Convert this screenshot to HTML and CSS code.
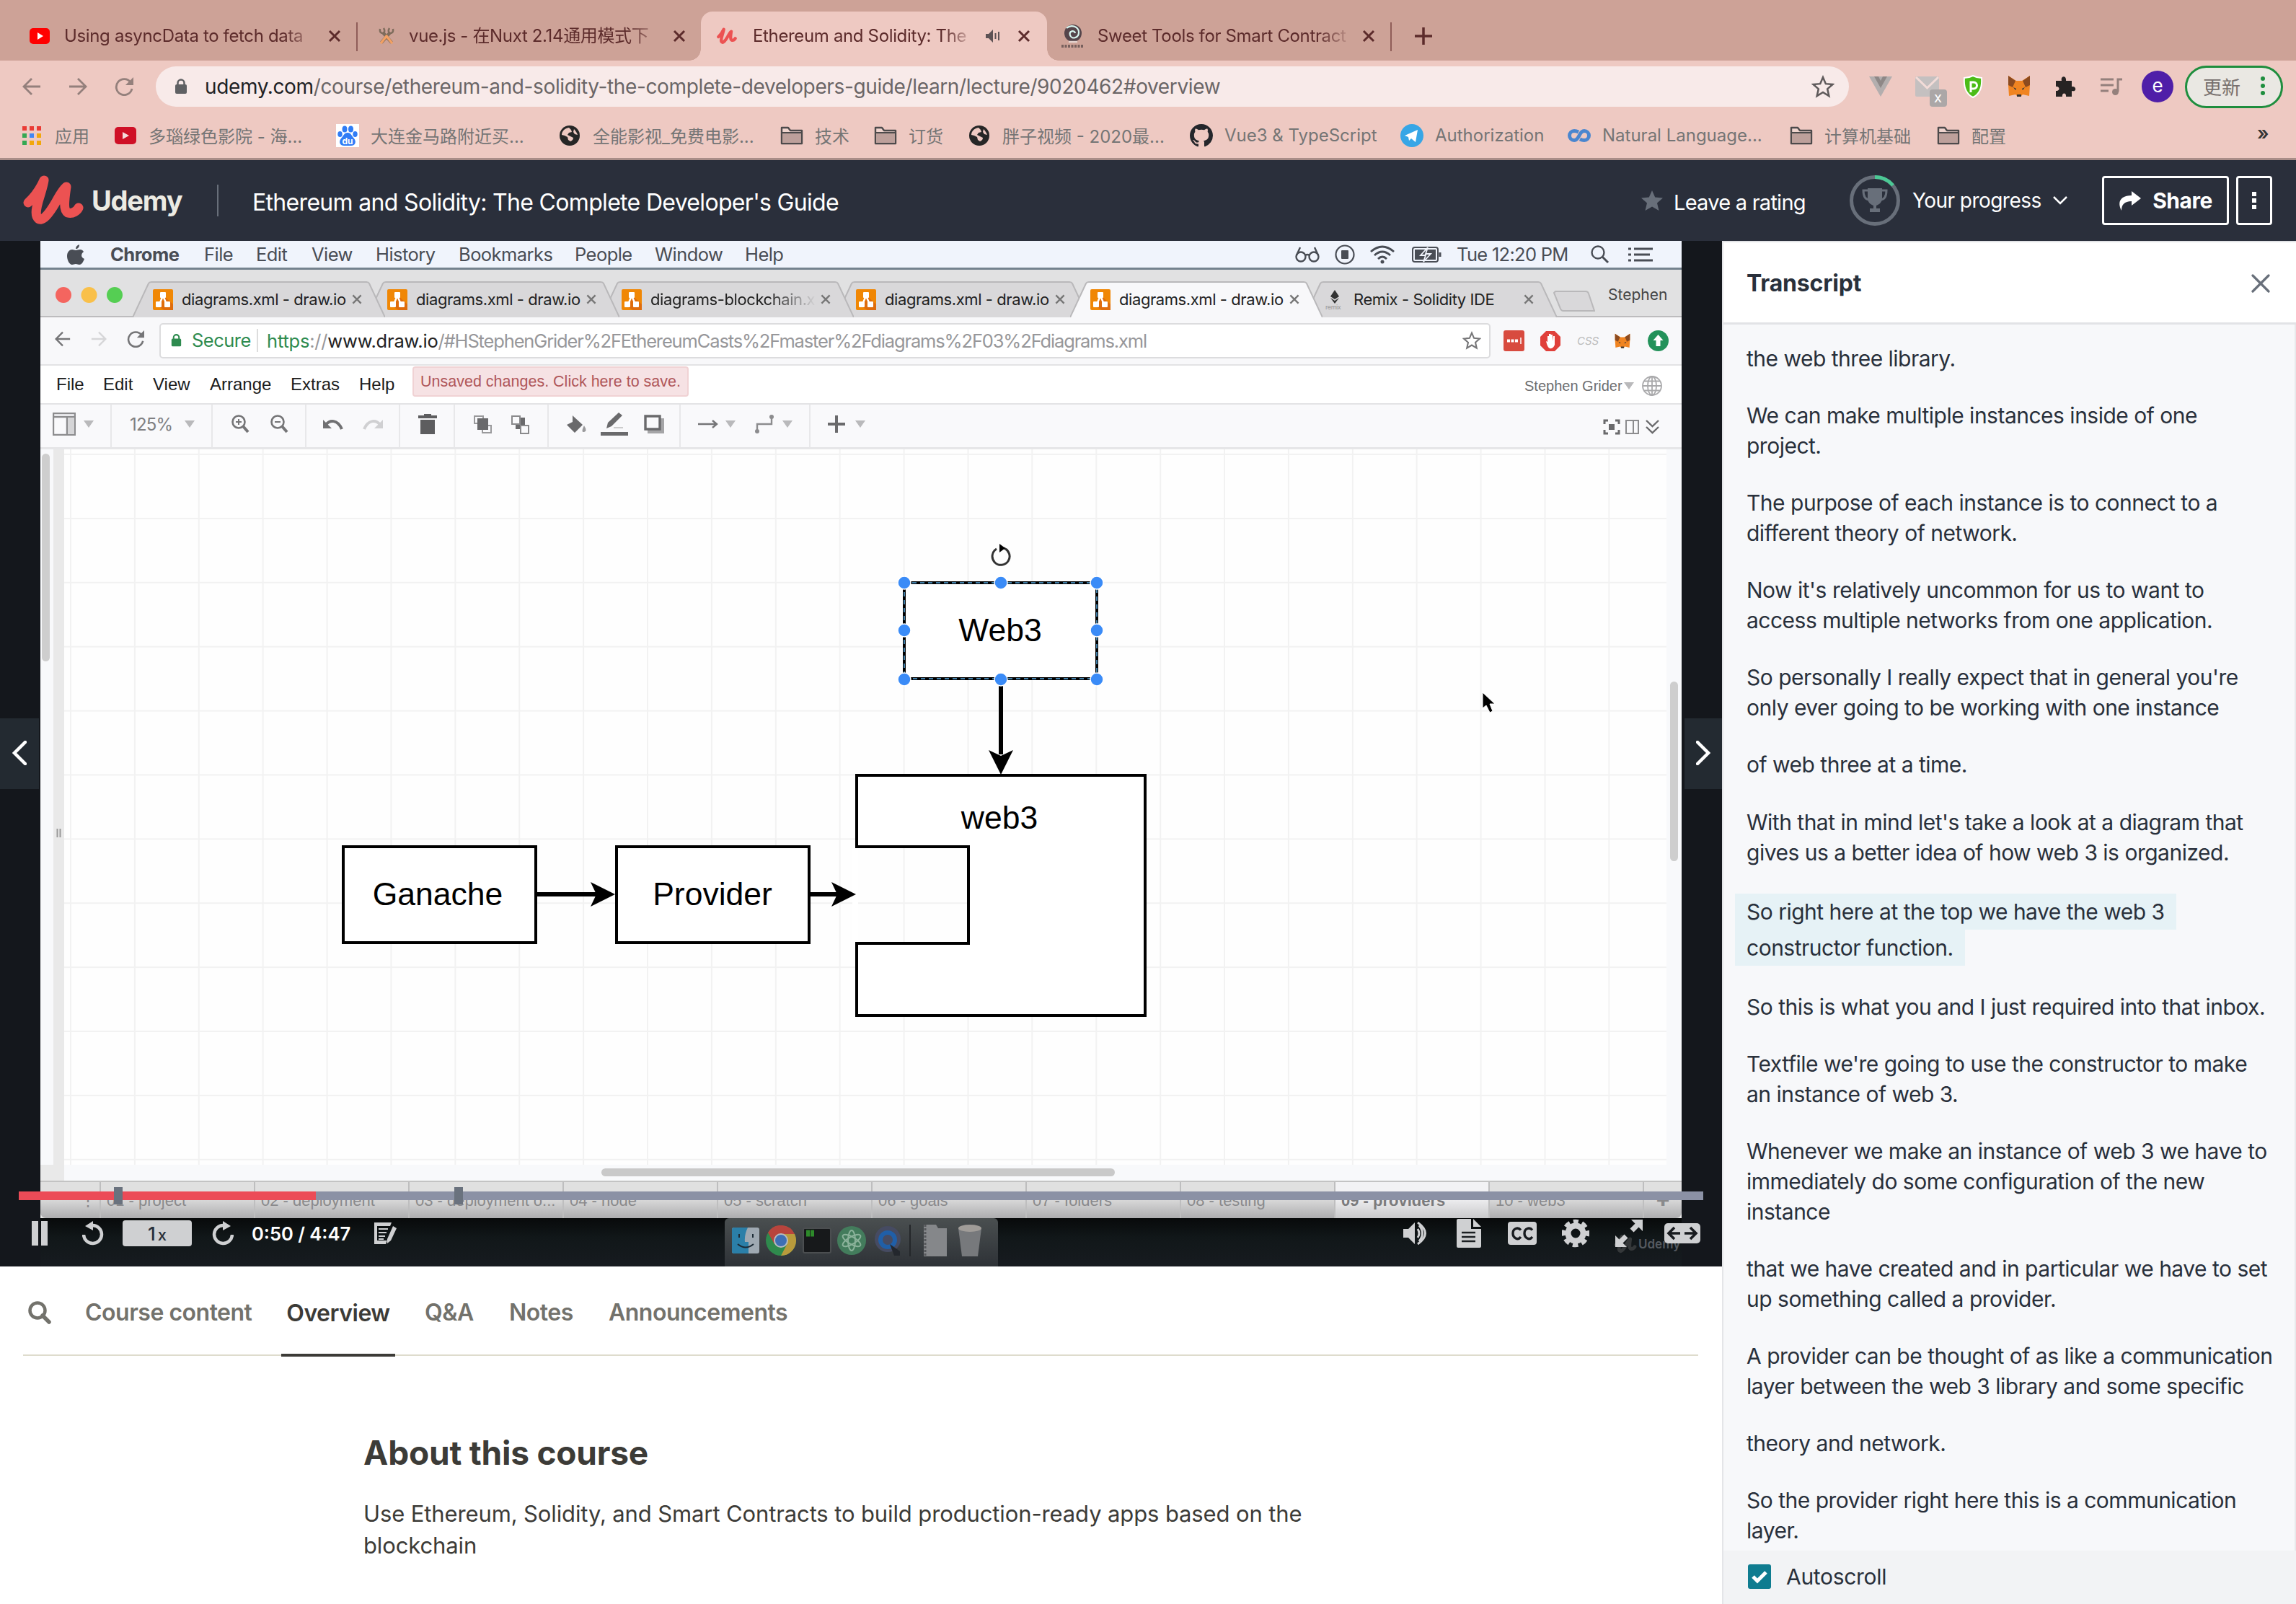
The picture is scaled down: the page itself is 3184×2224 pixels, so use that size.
FILE: index.html
```html
<!DOCTYPE html>
<html lang="zh-CN">
<head>
<meta charset="utf-8">
<title>Ethereum and Solidity: The Complete Developer's Guide | Udemy</title>
<link rel="stylesheet" href="styles.css">
</head>
<body>
<svg class="defs" width="0" height="0">
  <symbol id="close" viewBox="0 0 20 20"><path d="M3 3L17 17M17 3L3 17" fill="none" stroke="currentColor" stroke-width="3"/></symbol>
  <symbol id="ulogo" viewBox="0 0 84 70"><path d="M7 38C16 30 24 18 29 7C26 26 15 46 19 57C25 70 38 50 45 38C51 27 56 19 60 16C58 30 55 48 62 52C69 54 75 49 77 45" fill="none" stroke="#ec5252" stroke-width="13" stroke-linecap="round" stroke-linejoin="round"/></symbol>
  <symbol id="folder" viewBox="0 0 32 28"><path d="M2 3h9l3 4h16v18H2z" fill="#efd4ce" stroke="#4d4a4b" stroke-width="2.4" stroke-linejoin="round"/><path d="M3 11h26v13H3z" fill="#bda09b"/><path d="M2 10h28" stroke="#4d4a4b" stroke-width="2"/></symbol>
  <symbol id="globe" viewBox="0 0 28 28"><circle cx="14" cy="14" r="14" fill="#262626"/><path d="M13 3C7 4 3 8 3 13l4 1 4 2 1 4 3 2c2-1 4-2 4-5l-4-2-4-2 2-3 4-1-1-3zM20 5c2 2 4 5 5 8l-4-1-2-3z" fill="#eec9c2"/></symbol>
  <symbol id="drawio" viewBox="0 0 28 29"><rect width="28" height="29" rx="2" fill="#f08705"/><path d="M16 10l12 11v8H16L8 24z" fill="#df6c0c"/><path d="M14 9L9 21M14 9l5 12" stroke="#fff" stroke-width="2.5"/><rect x="10" y="4" width="8" height="8" rx="1" fill="#fff"/><rect x="4" y="17" width="8" height="8" rx="1" fill="#fff"/><rect x="16" y="17" width="8" height="8" rx="1" fill="#fff"/></symbol>
  <symbol id="trap" viewBox="0 0 350 50"><path d="M0 50L22 3Q23 1 26 1H324Q327 1 328 3L350 50" stroke="#b9b8ba" stroke-width="2"/></symbol>
  <symbol id="caret" viewBox="0 0 14 10"><path d="M0 0h14L7 10z" fill="#b9b9bb"/></symbol>
  <symbol id="back" viewBox="0 0 26 26"><path d="M25 13H2M13 2L2 13l11 11" fill="none" stroke="currentColor" stroke-width="2.8"/></symbol>
  <symbol id="reload" viewBox="0 0 26 26"><path d="M22 7A11 11 0 1 0 24 16" fill="none" stroke="currentColor" stroke-width="2.8"/><path d="M26 0v11H15z" fill="currentColor"/></symbol>
  <symbol id="star" viewBox="0 0 30 30"><path d="M15 3l3.6 8.4 9 .8-6.800 6 2 9L15 22.500 7.200 27.200l2-9-6.800-6 9-.8z" fill="none" stroke="currentColor" stroke-width="2.400"/></symbol>
  <symbol id="lock" viewBox="0 0 18 22"><path d="M4.500 10V6a4.500 4.500 0 0 1 9 0v4" fill="none" stroke="currentColor" stroke-width="2.500"/><rect y="8" x="1" width="16" height="13" rx="2" fill="currentColor"/></symbol>
  <symbol id="fox" viewBox="0 0 32 30"><path d="M1 0l11 7h8L31 0v13l-1 15-9-2-3 3h-4l-3-3-9 2L1 13z" fill="#f08421"/><path d="M1 0l10 7-4 9-6-3zM31 0L21 7l4 9 6-3z" fill="#8c4a1f"/><path d="M13 26h6v3h-6z" fill="#333"/><path d="M8 16l4 2-1 2zM24 16l-4 2 1 2z" fill="#26323f"/></symbol>
</svg>

<header class="browser">
  <div class="tabstrip">
    <div class="tab tab-first">
      <svg width="30" height="24" viewBox="0 0 30 24"><rect x="1" y="1" width="28" height="22" rx="5" fill="#f00"/><path d="M12 7l8 5-8 5z" fill="#fff"/></svg>
      <span class="tab-title">Using asyncData to fetch data</span><svg class="tab-x"><use href="#close"/></svg>
    </div>
    <i class="tab-sep"></i>
    <div class="tab tab-second">
      <svg width="22" height="24" viewBox="0 0 22 24"><g fill="none" stroke="#7f6c5c" stroke-width="4.500"><path d="M6 7l12 14M16 7L4 21"/></g><g fill="none" stroke="#7f6c5c" stroke-width="2.500"><path d="M2 2q-1 6 4 6 4-2 1-7M20 2q1 6-4 6-4-2-1-7"/></g><path d="M11 12l7 9M11 12l-7 9" stroke="#f2a063" stroke-width="3.500" stroke-linecap="round"/></svg>
      <span class="tab-title">vue.js - 在Nuxt 2.14通用模式下</span><svg class="tab-x"><use href="#close"/></svg>
    </div>
    <div class="tab tab-active">
      <svg width="28" height="24"><use href="#ulogo"/></svg>
      <span class="tab-title">Ethereum and Solidity: The</span>
      <svg width="22" height="20" viewBox="0 0 22 20"><path d="M1 7h4l6-6v18l-6-6H1z" fill="#5d5255"/><path d="M14.500 6v8M19 4v12" stroke="#5d5255" stroke-width="2"/></svg>
      <svg class="tab-x"><use href="#close"/></svg>
    </div>
    <div class="tab tab-last">
      <svg width="32" height="34" viewBox="0 0 32 34"><circle cx="17" cy="13" r="12" fill="#55454b"/><path d="M8 6c7-6 17-2 17 6s-10 10-12 4 6-8 7-3" fill="none" stroke="#d8f5ef" stroke-width="2.200"/><path d="M11 25h12" stroke="#e3d3ce" stroke-width="2.500"/><path d="M1 31h30" stroke="#77605d" stroke-width="4" stroke-dasharray="3 1.500"/></svg>
      <span class="tab-title">Sweet Tools for Smart Contract</span><svg class="tab-x"><use href="#close"/></svg>
    </div>
    <i class="tab-sep"></i>
    <svg class="newtab" width="24" height="24" viewBox="0 0 24 24"><path d="M12 0v24M0 12h24" stroke="#5c2b2b" stroke-width="3.500"/></svg>
  </div>

  <div class="toolbar">
    <svg class="nav" width="26" height="26"><use href="#back"/></svg>
    <svg class="nav flip" width="26" height="26"><use href="#back"/></svg>
    <svg class="nav" width="26" height="26"><use href="#reload"/></svg>
    <div class="omnibox">
      <svg class="lock" width="18" height="22"><use href="#lock"/></svg>
      <span class="url"><b>udemy.com</b>/course/ethereum-and-solidity-the-complete-developers-guide/learn/lecture/9020462#overview</span>
      <svg class="fav" width="32" height="32"><use href="#star"/></svg>
    </div>
    <div class="exts">
      <svg width="32" height="28" viewBox="0 0 32 28"><path d="M0 0h32L16 28z" fill="#b3aeae"/><path d="M7 0h6l3 6 3-6h6l-9 16z" fill="#8e8887"/></svg>
      <span class="mail"><svg width="33" height="28" viewBox="0 0 33 28"><rect width="33" height="28" rx="2" fill="#c4c0c0"/><path d="M1 1l15.500 15L32 1" fill="none" stroke="#f3dcd8" stroke-width="3"/></svg><em>x</em></span>
      <svg width="28" height="32" viewBox="0 0 28 32"><path d="M14 1c4 2 8 3 12 3 1 12-2 22-12 27C4 26 1 16 2 4c4 0 8-1 12-3z" fill="#4cbc17" stroke="#fff" stroke-width="2"/><path d="M11 24V10h4a4 4 0 0 1 0 9h-4" fill="none" stroke="#fff" stroke-width="3"/></svg>
      <svg width="32" height="30"><use href="#fox"/></svg>
      <svg width="30" height="30" viewBox="0 0 30 30"><path d="M2 7h8c-2-7 7-8 6 0h8v8c7-1 7 8 0 6v8h-8c1-6-6-6-5 0H2v-8c6 1 6-7 0-6z" fill="#262323"/></svg>
      <svg width="32" height="26" viewBox="0 0 32 26"><path d="M1 3h18M1 11h18M1 19h11" stroke="#94807c" stroke-width="3"/><path d="M25 20V3h6" fill="none" stroke="#94807c" stroke-width="3"/><circle cx="21.500" cy="20.500" r="4.500" fill="#94807c"/></svg>
      <span class="avatar">e</span>
    </div>
    <div class="update">更新<svg width="6" height="28" viewBox="0 0 6 28"><g fill="#1e8e3e"><circle cx="3" cy="4" r="3"/><circle cx="3" cy="14" r="3"/><circle cx="3" cy="24" r="3"/></g></svg></div>
  </div>

  <nav class="bookmarks">
    <a class="w130"><svg width="28" height="28" viewBox="0 0 28 28"><g stroke-width="6"><path d="M1 4h6M11 4h6M21 4h6" stroke="#ea3b35"/><path d="M1 14h6" stroke="#34a853"/><path d="M11 14h6" stroke="#4285f4"/><path d="M21 14h6M11 24h6M21 24h6" stroke="#f2a70b"/><path d="M1 24h6" stroke="#34a853"/></g></svg>应用</a>
    <a><svg width="30" height="24" viewBox="0 0 30 24"><rect width="30" height="24" rx="5" fill="#cf1026"/><path d="M11 7l9 5-9 5z" fill="#f5dcdc"/></svg>多瑙绿色影院 - 海...</a>
    <a><svg width="32" height="32" viewBox="0 0 32 32"><rect width="32" height="32" fill="#fff"/><g fill="#2f7cf6"><ellipse cx="12" cy="7" rx="3.500" ry="4.500"/><ellipse cx="20.500" cy="7" rx="3.500" ry="4.500"/><ellipse cx="5.500" cy="14" rx="3.200" ry="4"/><ellipse cx="26.500" cy="14" rx="3.200" ry="4"/><path d="M16 12c5 0 6 5 9 8 4 5 1 10-4 10H11c-5 0-8-5-4-10 3-3 4-8 9-8z"/></g><text x="8.500" y="28" font-size="12" font-weight="700" fill="#fff">du</text></svg>大连金马路附近买...</a>
    <a><svg width="28" height="28"><use href="#globe"/></svg>全能影视_免费电影...</a>
    <a class="w130"><svg width="32" height="28"><use href="#folder"/></svg>技术</a>
    <a class="w130"><svg width="32" height="28"><use href="#folder"/></svg>订货</a>
    <a><svg width="28" height="28"><use href="#globe"/></svg>胖子视频 - 2020最...</a>
    <a class="w292"><svg width="32" height="32" viewBox="0 0 16 16"><path fill="#24262b" d="M8 0C3.580 0 0 3.580 0 8c0 3.540 2.290 6.530 5.470 7.590.4.070.55-.17.55-.38 0-.19-.01-.82-.01-1.490-2.010.37-2.530-.49-2.690-.94-.09-.23-.48-.94-.82-1.130-.28-.15-.68-.52-.01-.53.63-.01 1.080.58 1.230.82.72 1.210 1.870.87 2.330.66.07-.52.28-.87.51-1.070-1.780-.2-3.640-.89-3.640-3.950 0-.87.31-1.590.82-2.150-.08-.2-.36-1.020.08-2.120 0 0 .67-.21 2.200.82a7.600 7.600 0 0 1 4 0c1.530-1.040 2.200-.82 2.200-.82.44 1.100.16 1.920.08 2.120.51.56.82 1.270.82 2.150 0 3.070-1.870 3.750-3.650 3.950.29.25.54.73.54 1.480 0 1.070-.01 1.930-.01 2.200 0 .21.15.46.55.38A8 8 0 0 0 16 8c0-4.420-3.580-8-8-8z"/></svg>Vue3 &amp; TypeScript</a>
    <a class="w232"><svg width="32" height="32" viewBox="0 0 32 32"><circle cx="16" cy="16" r="16" fill="#37a6e6"/><path d="M6 16L24 8l-3 17-6-5-3 3-1-5z" fill="#fff"/></svg>Authorization</a>
    <a><svg width="32" height="18" viewBox="0 0 32 18"><g fill="none" stroke="#4a86cf" stroke-width="5"><path d="M15 4Q12 2.500 9 2.500a6.500 6.500 0 0 0 0 13Q13 15.500 16 9T23 2.500a6.500 6.500 0 0 1 0 13Q20 15.500 17 14"/></g></svg>Natural Language...</a>
    <a class="w204"><svg width="32" height="28"><use href="#folder"/></svg>计算机基础</a>
    <a class="w204"><svg width="32" height="28"><use href="#folder"/></svg>配置</a>
    <span class="more">»</span>
  </nav>
</header>

<header class="course-bar">
  <svg class="brand" width="84" height="70"><use href="#ulogo"/></svg>
  <span class="brand-name">Udemy</span>
  <i class="bar-div"></i>
  <h1>Ethereum and Solidity: The Complete Developer's Guide</h1>
  <svg class="rate-star" width="30" height="28" viewBox="0 0 30 28"><path d="M15 0l4.200 9.500L30 10.500l-8 7 2.500 10.500L15 22.500 5.500 28 8 17.500l-8-7 10.800-1z" fill="#686f7a"/></svg>
  <span class="rate">Leave a rating</span>
  <svg class="trophy" width="70" height="70" viewBox="0 0 70 70"><circle cx="35" cy="35" r="32.500" fill="none" stroke="#686f7a" stroke-width="5"/><path d="M35 2.500A32.500 32.500 0 0 1 60 14" fill="none" stroke="#4bc995" stroke-width="5"/><g fill="#686f7a"><path d="M25 18h20v14c0 6-5 9-8 10v4h5v5H28v-5h5v-4c-3-1-8-4-8-10z"/></g><path d="M25 21h-6c0 9 3 13 9 13M45 21h6c0 9-3 13-9 13" fill="none" stroke="#686f7a" stroke-width="3"/></svg>
  <span class="progress-label">Your progress</span>
  <svg class="chev" width="20" height="12" viewBox="0 0 20 12"><path d="M1 1l9 9 9-9" fill="none" stroke="#fff" stroke-width="2.500"/></svg>
  <button class="btn share"><svg width="31" height="27" viewBox="0 0 31 27"><path d="M18 0l13 10-13 10v-6C8 14 4 19 4 27-3 14 4 6 18 6z" fill="#fff"/></svg>Share</button>
  <button class="btn dots"><svg width="6" height="24" viewBox="0 0 6 24"><path d="M0 0h6v6H0zM0 9h6v6H0zM0 18h6v6H0z" fill="#fff"/></svg></button>
</header>

<div class="columns">
<main>
<section class="player">
  <div class="frame">
    <div class="macbar">
      <svg width="24" height="28" viewBox="0 0 24 28"><path d="M17 0c0 4-2 6-5 6 0-3 2-5 5-6zM12 8c2 0 3-1 6-1 2 0 4 1 5 3-4 3-4 8 1 10-2 5-4 8-7 8-2 0-3-1-5-1s-3 1-5 1C3 28 0 21 0 16c0-6 4-9 7-9 2 0 3 1 5 1z" fill="#494d55"/></svg>
      <b>Chrome</b><span>File</span><span>Edit</span><span>View</span><span>History</span><span>Bookmarks</span><span>People</span><span>Window</span><span>Help</span>
      <svg width="34" height="22" viewBox="0 0 34 22"><g fill="none" stroke="#494d55" stroke-width="2.400"><circle cx="8" cy="14" r="6.500"/><circle cx="26" cy="14" r="6.500"/><path d="M14 12q3-2 6 0M2 12L7 1M32 12L27 1"/></g></svg>
      <svg width="28" height="28" viewBox="0 0 28 28"><circle cx="14" cy="14" r="12.500" fill="none" stroke="#494d55" stroke-width="2.200"/><rect x="9" y="8" width="10" height="12" rx="1" fill="#494d55"/></svg>
      <svg width="36" height="26" viewBox="0 0 36 26"><g fill="none" stroke="#494d55" stroke-width="2.800"><path d="M2 9q16-14 32 0M7 14q11-10 22 0M12 19q6-6 12 0"/></g><circle cx="18" cy="23" r="2.500" fill="#494d55"/></svg>
      <svg width="41" height="22" viewBox="0 0 41 22"><rect x="1" y="1" width="35" height="20" rx="3" fill="none" stroke="#494d55" stroke-width="2"/><rect x="4" y="4" width="29" height="14" fill="#494d55"/><path d="M39 8v6" stroke="#494d55" stroke-width="3"/><path d="M22 1l-10 11h7l-3 9 10-11h-7z" fill="#494d55" stroke="#f0f4fc" stroke-width="1.800"/></svg>
      <span class="clock">Tue 12:20 PM</span>
      <svg width="26" height="26" viewBox="0 0 26 26"><circle cx="10" cy="10" r="8.500" fill="none" stroke="#494d55" stroke-width="2.400"/><path d="M16 16l8 8" stroke="#494d55" stroke-width="3"/></svg>
      <svg width="34" height="20" viewBox="0 0 34 20"><path d="M0 2h4M8 2h26M0 10h4M8 10h22M0 18h4M8 18h26" stroke="#494d55" stroke-width="3"/></svg>
    </div>

    <div class="mtabs">
      <svg class="lights" width="94" height="24" viewBox="0 0 94 24"><circle cx="12" cy="12" r="11" fill="#f4655f"/><circle cx="47.500" cy="12" r="11" fill="#f9c04a"/><circle cx="83" cy="12" r="11" fill="#55ce53"/></svg>
      <div class="mtab z5"><svg class="trap"><use href="#trap"/></svg><svg class="fi"><use href="#drawio"/></svg><span>diagrams.xml - draw.io</span><svg class="mx"><use href="#close"/></svg></div>
      <div class="mtab z4"><svg class="trap"><use href="#trap"/></svg><svg class="fi"><use href="#drawio"/></svg><span>diagrams.xml - draw.io</span><svg class="mx"><use href="#close"/></svg></div>
      <div class="mtab z3"><svg class="trap"><use href="#trap"/></svg><svg class="fi"><use href="#drawio"/></svg><span class="fade">diagrams-blockchain.x</span><svg class="mx"><use href="#close"/></svg></div>
      <div class="mtab z2"><svg class="trap"><use href="#trap"/></svg><svg class="fi"><use href="#drawio"/></svg><span>diagrams.xml - draw.io</span><svg class="mx"><use href="#close"/></svg></div>
      <div class="mtab active"><svg class="trap"><use href="#trap"/></svg><svg class="fi"><use href="#drawio"/></svg><span>diagrams.xml - draw.io</span><svg class="mx"><use href="#close"/></svg></div>
      <div class="mtab z1"><svg class="trap"><use href="#trap"/></svg><svg class="fi" viewBox="0 0 28 29"><path d="M14 1l6 9-6 4-6-4zM8 12l6 4 6-4-6 8z" fill="#333"/><text x="1" y="28" font-size="9" fill="#999">remix</text></svg><span>Remix - Solidity IDE</span><svg class="mx"><use href="#close"/></svg></div>
      <svg class="mnew" width="58" height="29" viewBox="0 0 58 29"><path d="M3 1h42q3 0 4 3l8 24H14q-3 0-4-3L1 3z" fill="#d9d8da" stroke="#b9b8ba" stroke-width="2"/></svg>
      <span class="muser">Stephen</span>
    </div>

    <div class="mtool">
      <svg width="22" height="22"><use href="#back"/></svg>
      <svg class="flip faint" width="22" height="22"><use href="#back"/></svg>
      <svg width="24" height="24"><use href="#reload"/></svg>
      <div class="murl">
        <svg width="15" height="20"><use href="#lock"/></svg><span class="secure">Secure</span>
        <span class="addr"><u>https</u>://<b>www.draw.io</b><span class="path">/#HStephenGrider%2FEthereumCasts%2Fmaster%2Fdiagrams%2F03%2Fdiagrams.xml</span></span>
        <svg class="mstar" width="26" height="28"><use href="#star"/></svg>
      </div>
      <div class="mext">
        <svg width="29" height="29" viewBox="0 0 29 29"><rect width="29" height="29" rx="3" fill="#d84b3f"/><path d="M5 14.500h15" stroke="#fff" stroke-width="4" stroke-dasharray="4 1.500"/><path d="M24 10v9" stroke="#fff" stroke-width="1.500"/></svg>
        <svg width="28" height="28" viewBox="0 0 28 28"><path d="M8 0h12l8 8v12l-8 8H8l-8-8V8z" fill="#e0403a"/><path d="M8 14l2 1V7h2v6V4h2.500v9V5H17v9l1-7h2v12q-2 6-7 5-3-1-5-10z" fill="#fff"/></svg>
        <span>CSS</span>
        <svg width="22" height="22"><use href="#fox"/></svg>
        <svg width="29" height="29" viewBox="0 0 29 29"><circle cx="14.500" cy="14.500" r="14.500" fill="#23925a"/><path d="M14.500 6l7 8h-4v8h-6v-8h-4z" fill="#fff"/></svg>
      </div>
    </div>

    <div class="dmenu">
      <span>File</span><span>Edit</span><span>View</span><span>Arrange</span><span>Extras</span><span>Help</span>
      <em>Unsaved changes. Click here to save.</em>
      <small>Stephen Grider</small>
      <svg width="14" height="10"><use href="#caret"/></svg>
      <svg width="28" height="28" viewBox="0 0 28 28"><g fill="none" stroke="#a9a9ab" stroke-width="1.800"><circle cx="14" cy="14" r="13"/><ellipse cx="14" cy="14" rx="6" ry="13"/><path d="M1 14h26M14 1v26M3 7.500h22M3 20.500h22"/></g></svg>
    </div>

    <div class="dtool">
      <svg width="32" height="32" viewBox="0 0 32 32"><path d="M1 1h30v30H1zM1 6h30M20 6v25" fill="none" stroke="#8c8c8e" stroke-width="2.400"/><path d="M21 7h9v23h-9z" fill="#d5d5d7"/></svg>
      <svg width="14" height="10"><use href="#caret"/></svg><i></i>
      <span>125%</span><svg width="14" height="10"><use href="#caret"/></svg><i></i>
      <svg width="26" height="26" viewBox="0 0 26 26"><g fill="none" stroke="#757577" stroke-width="2.600"><circle cx="11" cy="10" r="8.500"/><path d="M17 16l7 8" stroke-width="4"/><path d="M7 10h8M11 6v8" stroke-width="2"/></g></svg>
      <svg width="26" height="26" viewBox="0 0 26 26"><g fill="none" stroke="#757577" stroke-width="2.600"><circle cx="11" cy="10" r="8.500"/><path d="M17 16l7 8" stroke-width="4"/><path d="M7 10h8" stroke-width="2"/></g></svg><i></i>
      <svg width="28" height="16" viewBox="0 0 28 16"><path d="M0 2v12h12z" fill="#707072"/><path d="M4 9C9 2 20 1 26 15" fill="none" stroke="#707072" stroke-width="4"/></svg>
      <svg width="28" height="16" viewBox="0 0 28 16"><path d="M28 2v12H16z" fill="#d0d0d2"/><path d="M24 9C19 2 8 1 2 15" fill="none" stroke="#d0d0d2" stroke-width="4"/></svg><i></i>
      <svg width="26" height="28" viewBox="0 0 26 28"><path d="M0 2h8V0h10v2h8v4H0zM3 8h20v20H3z" fill="#5d5d5f"/></svg><i></i>
      <svg width="27" height="27" viewBox="0 0 27 27"><path d="M2 2h12v10H2zM13 15h12v10H13z" fill="none" stroke="#9a9a9c" stroke-width="2"/><path d="M6 5h15v16H6z" fill="#6a6a6c"/></svg>
      <svg width="27" height="27" viewBox="0 0 27 27"><path d="M7 4h13v16H7z" fill="#6a6a6c"/><path d="M2 2h11v11H2zM14 15h11v11H14z" fill="#f9f9fb" stroke="#8a8a8c" stroke-width="2"/></svg><i></i>
      <svg width="28" height="26" viewBox="0 0 28 26"><path d="M9 1v9l-8 4 11 11 11-11L11 3z" fill="#6a6a6c"/><path d="M25 15q5 8 0 9t0-9z" fill="#9a9a9c"/></svg>
      <svg width="38" height="32" viewBox="0 0 38 32"><path d="M0 27h38v5H0z" fill="#6a6a6c"/><path d="M8 22l2-8L25 0l5 4-15 15z" fill="#6a6a6c"/><path d="M18 21h13" stroke="#ccc" stroke-width="2"/></svg>
      <svg width="28" height="26" viewBox="0 0 28 26"><path d="M5 5h23v21H5z" fill="#a5a5a7"/><path d="M2 2h20v18H2z" fill="#f9f9fb" stroke="#6a6a6c" stroke-width="3.400"/></svg><i></i>
      <svg width="28" height="12" viewBox="0 0 28 12"><path d="M0 6h26M20 1l6 5-6 5" fill="none" stroke="#757577" stroke-width="2.400"/></svg>
      <svg width="14" height="10"><use href="#caret"/></svg>
      <svg width="28" height="28" viewBox="0 0 28 28"><path d="M4 24V14h20V4" fill="none" stroke="#8c8c8e" stroke-width="2.400"/><circle cx="4" cy="24" r="3" fill="#8c8c8e"/><circle cx="24" cy="4" r="3" fill="#8c8c8e"/></svg>
      <svg width="14" height="10"><use href="#caret"/></svg><i></i>
      <svg width="24" height="24" viewBox="0 0 24 24"><path d="M12 0v24M0 12h24" stroke="#6a6a6c" stroke-width="4"/></svg>
      <svg width="14" height="10"><use href="#caret"/></svg>
      <svg class="low" width="24" height="22" viewBox="0 0 24 22"><path d="M2 7V2h5M17 2h5v5M22 15v5h-5M7 20H2v-5" fill="none" stroke="#6a6a6c" stroke-width="3"/><path d="M8 7h8v8H8z" fill="#6a6a6c"/></svg>
      <svg class="low" width="19" height="20" viewBox="0 0 19 20"><path d="M1 1h17v18H1zM11 1v18" fill="none" stroke="#8c8c8e" stroke-width="2"/></svg>
      <svg class="low" width="19" height="20" viewBox="0 0 19 20"><path d="M1 1l8.500 8L18 1M1 10l8.500 8 8.500-8" fill="none" stroke="#6a6a6c" stroke-width="2.400"/></svg>
    </div>

    <div class="editor">
      <div class="gutter"><i></i></div>
      <div class="split"><svg width="7" height="12" viewBox="0 0 7 12"><path d="M1.500 0v12M5.500 0v12" stroke="#999" stroke-width="2"/></svg></div>
      <div class="canvas">
        <svg width="2222" height="992" viewBox="89 623 2222 992">
          <g fill="#fff" stroke="#000" stroke-width="4">
            <rect x="476" y="1174" width="267" height="133"/>
            <rect x="855" y="1174" width="267" height="133"/>
            <rect x="1254" y="808" width="267" height="133"/>
            <path d="M1188 1174V1075H1588V1408H1188V1308H1343V1174z"/>
            <path d="M1186 1176.500V1306" stroke="#fff" stroke-width="8"/>
          </g>
          <g stroke="#000" stroke-width="6"><path d="M743 1240h90M1122 1240h44M1388 942v104"/></g>
          <path d="M853 1240l-34-17 8 17-8 17zM1187 1240l-34-17 8 17-8 17zM1388 1074l-17-34 17 8 17-8z"/>
          <rect x="1254" y="808" width="267" height="133" fill="none" stroke="#56a8e0" stroke-width="1.500" stroke-dasharray="6 5"/>
          <g fill="#3a8bf7" stroke="#fff" stroke-width="1.500"><circle cx="1254" cy="808" r="9"/><circle cx="1388" cy="808" r="9"/><circle cx="1521" cy="808" r="9"/><circle cx="1254" cy="874" r="9"/><circle cx="1521" cy="874" r="9"/><circle cx="1254" cy="942" r="9"/><circle cx="1388" cy="942" r="9"/><circle cx="1521" cy="942" r="9"/></g>
          <path d="M1392 760a12 12 0 1 1-10 1" fill="none" stroke="#333" stroke-width="3"/><path d="M1386 754l8 6-8 6z"/>
          <g font-size="44.500" text-anchor="middle"><text x="1387" y="889">Web3</text><text x="1386" y="1149">web3</text><text x="607" y="1255">Ganache</text><text x="988" y="1255">Provider</text></g>
          <path d="M2056 960v22l5-4 5 10 4-2-4-10h7z" stroke="#fff" stroke-width="1"/>
        </svg>
      </div>
      <div class="vscroll"><i></i></div>
    </div>
    <div class="hscroll"><i></i></div>
    <div class="pages">
      <span>⋮</span><span>01 - project</span><span>02 - deployment</span><span>03 - deployment o...</span><span>04 - node</span><span>05 - scratch</span><span>06 - goals</span><span>07 - folders</span><span>08 - testing</span><span class="current">09 - providers</span><span>10 - web3</span><span>✚</span>
    </div>
    <div class="desk">
      <div class="dock">
        <svg width="38" height="36" viewBox="0 0 38 36"><rect width="38" height="36" rx="3" fill="#9fa9b2"/><path d="M0 3q0-3 3-3h19q-5 10-4 20h5v16H3q-3 0-3-3z" fill="#2b7fa8"/><path d="M10 9v5M29 9v5M8 23q11 9 22 0" stroke="#1c2a35" stroke-width="2" fill="none"/></svg>
        <svg width="42" height="42" viewBox="0 0 42 42"><circle cx="21" cy="21" r="21" fill="#2f8a4d"/><path d="M3 10A21 21 0 0 1 40 12H21l-9 14z" fill="#b8443d"/><path d="M40 12a21 21 0 0 1-19 30l9-17-9-13z" fill="#b89a3c"/><circle cx="21" cy="21" r="9" fill="#3e6fb5" stroke="#b9bcc0" stroke-width="2"/></svg>
        <svg width="40" height="36" viewBox="0 0 40 36"><rect x="1" y="1" width="38" height="34" rx="2" fill="#17191b" stroke="#4b4e50" stroke-width="2"/><path d="M5 8h11" stroke="#2d8a2a" stroke-width="9" stroke-dasharray="5 1"/></svg>
        <svg width="40" height="42" viewBox="0 0 40 42"><circle cx="20" cy="21" r="20" fill="#437c5c"/><g fill="none" stroke="#8cb39b" stroke-width="2"><ellipse cx="20" cy="21" rx="5" ry="14"/><ellipse cx="20" cy="21" rx="5" ry="14" transform="rotate(60 20 21)"/><ellipse cx="20" cy="21" rx="5" ry="14" transform="rotate(120 20 21)"/></g></svg>
        <svg width="38" height="42" viewBox="0 0 38 42"><circle cx="19" cy="19" r="18" fill="#464b62"/><circle cx="19" cy="20" r="10" fill="none" stroke="#205fa8" stroke-width="6"/><path d="M22 26l14 10v6h-8z" fill="#23272d"/></svg>
        <i></i>
        <svg width="32" height="44" viewBox="0 0 32 44"><path d="M0 0h17l3 5h12v39H0z" fill="#85878a"/><path d="M2 0v44" stroke="#55575a" stroke-width="3" stroke-dasharray="3 2"/></svg>
        <svg width="34" height="44" viewBox="0 0 34 44"><path d="M1 5h32l-5 39H6z" fill="#77797c"/><ellipse cx="17" cy="5" rx="16" ry="5" fill="#a09c98"/></svg>
      </div>
      <span class="watermark"><svg width="36" height="26"><use href="#ulogo"/></svg>Udemy</span>
    </div>
  </div>

  <button class="goto prev"><svg width="20" height="34" viewBox="0 0 20 34"><path d="M18 2L3 17l15 15" fill="none" stroke="#fff" stroke-width="4.500" stroke-linecap="round"/></svg></button>
  <button class="goto next"><svg width="20" height="34" viewBox="0 0 20 34"><path d="M2 2l15 15L2 32" fill="none" stroke="#fff" stroke-width="4.500" stroke-linecap="round"/></svg></button>
  <div class="seek"><i class="played"></i><i class="mark m1"></i><i class="mark m2"></i></div>
  <div class="controls">
    <svg width="22" height="34" viewBox="0 0 22 34"><path d="M0 0h9v34H0zM13 0h9v34h-9z" fill="#cfd0d2"/></svg>
    <svg width="32" height="34" viewBox="0 0 32 34"><path d="M14 6a12.500 12.500 0 1 1-12 13" fill="none" stroke="#cfd0d2" stroke-width="4.500"/><path d="M15 0v13L4 7z" fill="#cfd0d2"/></svg>
    <span class="rate-box">1<small>x</small></span>
    <svg width="32" height="34" viewBox="0 0 32 34"><path d="M18 6A12.500 12.500 0 1 0 30 19" fill="none" stroke="#cfd0d2" stroke-width="4.500"/><path d="M17 0v13l11-6z" fill="#cfd0d2"/></svg>
    <span class="time">0:50 / 4:47</span>
    <svg width="32" height="30" viewBox="0 0 32 30"><path d="M0 0h24l-2 5H4v20h14l-2 5H0z" fill="#cfd0d2"/><path d="M6 9h13M6 14h11M6 19h9M6 23h7" stroke="#cfd0d2" stroke-width="2.200"/><path d="M26 5l5 3-8 17-5 4v-6z" fill="#cfd0d2"/></svg>
    <svg width="36" height="32" viewBox="0 0 36 32"><path d="M0 10h7l9-9v30l-9-9H0z" fill="#cfd0d2"/><path d="M20 10q4 6 0 12M22 5q9 11 0 22M20 1q21 15 0 30" fill="none" stroke="#cfd0d2" stroke-width="3"/></svg>
    <svg width="34" height="40" viewBox="0 0 34 40"><path d="M2 0h18v14h14v24q0 2-2 2H2q-2 0-2-2V2q0-2 2-2zM23 0l11 11H23z" fill="#cfd0d2"/><path d="M7 19h19M7 25h19M7 31h19" stroke="#1c2023" stroke-width="2.600"/></svg>
    <svg width="40" height="32" viewBox="0 0 40 32"><rect width="40" height="32" rx="4" fill="#cfd0d2"/><path d="M18 11.500q-3-3.500-7-2t-4 6.500 4 7 7-2M34 11.500q-3-3.500-7-2t-4 6.500 4 7 7-2" fill="none" stroke="#181b1f" stroke-width="3.400"/></svg>
    <svg width="38" height="40" viewBox="0 0 38 40"><circle cx="19" cy="20" r="10.500" fill="none" stroke="#cfd0d2" stroke-width="8"/><circle cx="19" cy="20" r="16" fill="none" stroke="#cfd0d2" stroke-width="6.500" stroke-dasharray="7.500 5.070" stroke-dashoffset="3.750" transform="rotate(-90 19 20)"/></svg>
    <svg width="40" height="40" viewBox="0 0 40 40"><path d="M25 1h14v14M1 25v14h14" fill="none" stroke="#cfd0d2" stroke-width="0"/><path d="M23 1h16v16l-5.500-5.500-7 7-5-5 7-7zM1 39V23l5.500 5.500 7-7 5 5-7 7L17 39z" fill="#cfd0d2"/></svg>
    <svg width="50" height="28" viewBox="0 0 50 28"><rect width="50" height="28" rx="5" fill="#cfd0d2"/><path d="M6 14h38M14 6l-8 8 8 8M36 6l8 8-8 8" fill="none" stroke="#181b1f" stroke-width="3.600"/><path d="M22 11h6v6h-6z" fill="#cfd0d2"/></svg>
  </div>
</section>

<nav class="course-tabs">
  <svg width="32" height="32" viewBox="0 0 32 32"><circle cx="13" cy="13" r="10.500" fill="none" stroke="#73726c" stroke-width="4.500"/><path d="M20 20l9 9" stroke="#73726c" stroke-width="5.500" stroke-linecap="round"/></svg>
  <a>Course content</a><a class="on">Overview</a><a>Q&amp;A</a><a>Notes</a><a>Announcements</a>
</nav>
<article>
  <h2>About this course</h2>
  <p>Use Ethereum, Solidity, and Smart Contracts to build production-ready apps based on the blockchain</p>
</article>
</main>

<aside>
  <div class="side-head"><h3>Transcript</h3><svg width="26" height="26" viewBox="0 0 26 26"><path d="M2 2l22 22M24 2L2 24" stroke="#686f7a" stroke-width="3.200" stroke-linecap="round"/></svg></div>
  <div class="cues">
    <p>the web three library.</p>
    <p>We can make multiple instances inside of one<br>project.</p>
    <p>The purpose of each instance is to connect to a<br>different theory of network.</p>
    <p>Now it's relatively uncommon for us to want to<br>access multiple networks from one application.</p>
    <p>So personally I really expect that in general you're<br>only ever going to be working with one instance</p>
    <p>of web three at a time.</p>
    <p>With that in mind let's take a look at a diagram that<br>gives us a better idea of how web 3 is organized.</p>
    <p class="now"><span>So right here at the top we have the web 3</span><span>constructor function.</span></p>
    <p>So this is what you and I just required into that inbox.</p>
    <p>Textfile we're going to use the constructor to make<br>an instance of web 3.</p>
    <p>Whenever we make an instance of web 3 we have to<br>immediately do some configuration of the new<br>instance</p>
    <p>that we have created and in particular we have to set<br>up something called a provider.</p>
    <p>A provider can be thought of as like a communication<br>layer between the web 3 library and some specific</p>
    <p>theory and network.</p>
    <p>So the provider right here this is a communication<br>layer.</p>
  </div>
  <label class="auto"><svg width="32" height="34" viewBox="0 0 32 34"><rect width="32" height="34" rx="3" fill="#0f7c90"/><path d="M7 17l6 6L25 11" fill="none" stroke="#fff" stroke-width="5"/></svg>Autoscroll</label>
</aside>
</div>
</body>
</html>
```
FILE: styles.css
```css
* { box-sizing: border-box; }
body { margin: 0; width: 3184px; height: 2224px; overflow: hidden; background: #fff; font-family: Inter, "Noto Sans CJK SC", sans-serif; color: #29303b; }
svg { display: block; flex: none; }
.defs { position: absolute; }
h1, h2, h3, p { margin: 0; font-weight: 400; }
b, em, i, u, small { font-style: normal; text-decoration: none; }
button { padding: 0; border: 0; background: none; font: inherit; color: #fff; display: flex; align-items: center; justify-content: center; }
.flip { transform: scaleX(-1); }

/* browser chrome */
.browser { height: 222px; background: #eec9c2; border-bottom: 3px solid #a98d88; }
.tabstrip { height: 84px; padding-top: 16px; background: #cda297; display: flex; }
.tab { height: 68px; width: 476px; display: grid; grid-template-columns: 71px 365px 20px; align-items: center; color: #5c2b2b; font-size: 24px; letter-spacing: -.35px; }
.tab > svg:first-child { justify-self: center; }
.tab-second > svg:first-child { margin-left: 9px; }
.tab-first { width: 494px; grid-template-columns: 40px 49px 365px 20px; }
.tab-first > svg:first-child { grid-column: 2; justify-self: start; }
.tab-active { width: 480px; grid-template-columns: 72px 322px 44px 20px; background: #eec9c2; border-radius: 16px 16px 0 0; position: relative; }
.tab-active::before, .tab-active::after { content: ""; position: absolute; bottom: 0; width: 16px; height: 16px; }
.tab-active::before { left: -16px; background: radial-gradient(circle at 0 0, transparent 15.500px, #eec9c2 16px); }
.tab-active::after { right: -16px; background: radial-gradient(circle at 100% 0, transparent 15.500px, #eec9c2 16px); }
.tab-last { width: 476px; grid-template-columns: 70px 366px 20px; }
.tab-title { width: 355px; height: 40px; line-height: 40px; white-space: nowrap; -webkit-mask-image: linear-gradient(90deg, #000 86%, transparent 100%); }
.tab-active .tab-title { width: 308px; }
.tab-x { width: 20px; height: 20px; color: #5c2b2b; }
.tab-sep { width: 2px; height: 40px; margin-top: 15px; background: #8f5d58; }
.newtab { margin: 22px 0 0 32px; }
.toolbar { height: 72px; display: flex; align-items: center; padding-left: 31px; }
.nav { color: #94807c; margin-right: 38px; }
.nav:nth-child(3) { margin-right: 31px; }
.omnibox { width: 2348px; height: 56px; border-radius: 28px; background: #f8eae9; display: flex; align-items: center; padding: 0 20px 0 26px; }
.lock { color: #5f6063; margin-right: 24px; }
.url { flex: 1; font-size: 28px; letter-spacing: -.37px; color: #6b6667; white-space: nowrap; }
.url b { font-weight: 400; color: #202124; }
.fav { color: #5f5a5b; }
.exts { width: 466px; padding-left: 12px; display: grid; grid-template-columns: repeat(7, 64px); justify-items: center; align-items: center; }
.mail { position: relative; }
.mail em { position: absolute; left: 20px; top: 18px; width: 24px; height: 24px; line-height: 22px; border-radius: 4px; background: #aba7a7; color: #fff; font-size: 20px; text-align: center; }
.avatar { width: 44px; height: 44px; line-height: 42px; border-radius: 50%; background: #4f1ea8; color: #fff; font-size: 26px; text-align: center; }
.update { width: 136px; height: 59px; border: 3px solid #1e8e3e; border-radius: 30px; background: #eae8e3; display: flex; align-items: center; padding: 0 0 2px 22px; gap: 28px; font-size: 26px; color: #77706e; white-space: nowrap; }
.bookmarks { height: 63px; display: flex; padding-left: 28px; }
.bookmarks a { width: 308px; display: grid; grid-template-columns: 32px 1fr; column-gap: 16px; justify-items: start; align-items: center; font-size: 24px; letter-spacing: 0; color: #757575; white-space: nowrap; }
.bookmarks a > svg { justify-self: center; }
.bookmarks .w130 { width: 130px; }
.bookmarks .w292 { width: 292px; }
.bookmarks .w232 { width: 232px; }
.bookmarks .w204 { width: 204px; }
.more { margin: 13px 0 0 240px; font-size: 26px; font-weight: 600; color: #333; }

/* course header */
.course-bar { height: 112px; background: #2a2f3b; color: #fff; display: flex; align-items: center; padding-left: 32px; white-space: nowrap; }
.brand-name { width: 174px; margin-left: 11px; font-size: 38px; font-weight: 700; letter-spacing: -1.200px; color: #ecebe3; }
.bar-div { width: 2px; height: 44px; background: #686f7a; }
h1 { width: 1926px; margin-left: 47px; padding-top: 4px; font-size: 32px; letter-spacing: -.68px; }
.rate { width: 244px; margin-left: 15px; font-size: 29px; letter-spacing: -.75px; padding-top: 4px; }
.progress-label { width: 195px; margin-left: 17px; font-size: 28px; letter-spacing: -.55px; }
.btn { height: 68px; border: 3px solid #fff; border-radius: 4px; }
.share { width: 176px; margin-left: 48px; gap: 16px; font-size: 30px; font-weight: 700; letter-spacing: -.5px; }
.dots { width: 50px; margin-left: 10px; }

.columns { display: flex; height: 1890px; }
main { width: 2388px; }

/* player */
.player { position: relative; height: 1422px; background: #14171c; padding-left: 56px; }
.frame { width: 2276px; height: 1422px; overflow: hidden; background: #e9e9e9; }
.macbar { height: 40px; padding-left: 37px; background: #f0f4fc; border-bottom: 3px solid #74828e; display: grid; grid-template-columns: 60px 130px 72px 77px 89px 115px 161px 111px 125px 763px 55px 48px 59px 62px 186px 52px 40px; align-items: center; font-size: 25.500px; letter-spacing: -.55px; color: #494d55; white-space: nowrap; }
.macbar b { font-weight: 700; }
.clock { letter-spacing: -.7px; }
.mtabs { height: 66px; padding: 16px 0 0 20px; background: #e1e1e2; border-bottom: 2px solid #bdbcbe; display: flex; }
.lights { margin: 7px 14px 0 0; }
.mtab { position: relative; width: 350px; height: 50px; margin-right: -25px; padding-left: 28px; display: flex; align-items: center; font-size: 22px; letter-spacing: -.42px; color: #222; white-space: nowrap; }
.trap { position: absolute; left: 0; top: 0; width: 350px; height: 50px; fill: #d9d8da; z-index: -1; }
.mtab.z5 { z-index: 5; } .mtab.z4 { z-index: 4; } .mtab.z3 { z-index: 3; } .mtab.z2 { z-index: 2; } .mtab.z1 { z-index: 1; }
.mtab.active { z-index: 6; }
.active .trap { fill: #f8f8fa; }
.fi { width: 28px; height: 29px; margin-right: 12px; }
.mtab span { width: 235px; }
.fade { -webkit-mask-image: linear-gradient(90deg, #000 70%, transparent 98%); }
.mx { width: 16px; height: 16px; color: #777; }
.mnew { margin: 13px 0 0 20px; }
.muser { margin: 6px 0 0 18px; font-size: 21px; color: #444; }
.mtool { height: 65px; padding-left: 20px; background: #f8f8fa; display: flex; align-items: center; color: #757577; }
.mtool > svg { margin: 0 28px 5px 0; }
.mtool > svg:nth-child(3) { margin-right: 21px; }
.mtool > .faint { color: #d6d6d8; }
.murl { width: 1846px; height: 49px; margin-bottom: 1px; border: 2px solid #dcdcde; border-radius: 5px; background: #fff; display: flex; align-items: center; padding: 0 11px 0 14px; font-size: 25.500px; letter-spacing: -.2px; white-space: nowrap; }
.murl > svg:first-child { color: #2e8b4f; margin-right: 14px; }
.secure { width: 92px; height: 32px; line-height: 32px; letter-spacing: -.5px; color: #2e8b4f; border-right: 2px solid #ddd; }
.addr { flex: 1; margin-left: 12px; color: #97979a; }
.addr u { color: #2e8b4f; }
.addr b { color: #222; font-weight: 400; }
.path { letter-spacing: -1.150px; }
.mext { margin-left: 18px; display: grid; grid-template-columns: 51px 51px 52px 46px 30px; align-items: center; }
.mext span { font: italic 15px Inter; color: #bbb; }
.dmenu { height: 56px; border: solid #e3e3e5; border-width: 2px 0 2px; background: #fff; display: grid; grid-template-columns: 65px 69px 79px 112px 95px 74px 1542px 138px 25px 30px; padding: 0 0 1px 22px; align-items: center; font: 24px "Liberation Sans", sans-serif; color: #1c1c1c; white-space: nowrap; }
.dmenu em { justify-self: start; width: 383px; height: 42px; line-height: 38px; margin-bottom: 7px; border: 2px solid #f0d2d4; border-radius: 4px; background: #f6e2e4; color: #b0575a; font-size: 21.500px; text-align: center; }
.dmenu small { font-size: 20px; color: #6d6d6f; padding-top: 5px; }
.dmenu svg { margin-top: 4px; }
.dtool { height: 62px; border-bottom: 3px solid #e6e6e8; background: #f9f9fb; padding: 0 0 4px 17px; display: grid; grid-template-columns: 43px 37px 27px 76px 37px 27px 54px 49px 25px 55px 50px 27px 49px 27px 52px 51px 26px 48px 60px 49px 26px 38px 40px 39px 37px 26px 38px 1037px 31px 28px 20px; align-items: center; font-size: 24px; color: #808082; }
.dtool svg, .dtool span { margin-bottom: 5px; }
.dtool i { width: 2px; height: 59px; background: #e8e8ea; }
.dtool .low { margin: 3px 0 0; }
.dtool span { letter-spacing: -.8px; }
.editor { height: 992px; display: flex; background: #f8f9fb; }
.gutter { width: 18px; padding: 6px 2px; }
.gutter i { display: block; width: 11px; height: 288px; border-radius: 6px; background: #cecece; }
.split { width: 15px; padding: 526px 0 0 4px; background: #e9e9e9; }
.canvas { width: 2222px; background: linear-gradient(#f2f2f2 2px, transparent 2px) 0 6px / 100% 88.900px, linear-gradient(90deg, #f2f2f2 2px, transparent 2px) 8px 0 / 88.900px 100%, #fefefe; font-family: "Liberation Sans", sans-serif; }
.vscroll { width: 21px; padding: 322px 5px; }
.vscroll i { display: block; width: 11px; height: 249px; border-radius: 6px; background: #cecece; }
.hscroll { height: 22px; margin-left: 33px; padding: 5px 0 0 745px; background: #f8f9fb; }
.hscroll i { display: block; width: 712px; height: 11px; border-radius: 6px; background: #c9c9c9; }
.pages { height: 52px; padding-left: 33px; border-top: 2px solid #c3c3c3; border-radius: 0 0 8px 8px; background: linear-gradient(#e0e0e0 40%, #adadaf); display: grid; grid-template-columns: 51px repeat(10, 214px) 52px; font: 22px/52px "Liberation Sans", sans-serif; color: #8a8a8c; white-space: nowrap; }
.pages span { border-right: 2px solid #bebebf; padding-left: 8px; }
.pages span:first-child { padding-left: 22px; }
.pages .current { font-weight: 700; background: linear-gradient(#f2f2f4 40%, #c6c6c8); color: #7b7b7d; }
.pages span:last-child { padding-left: 17px; border: 0; font-family: "DejaVu Sans"; }
.desk { position: relative; height: 68px; background: linear-gradient(#080a0b, #111719 40%, #171b20); padding-left: 949px; }
.dock { width: 379px; height: 68px; padding: 0 0 6px 10px; border-radius: 6px 6px 0 0; background: linear-gradient(#4a4f50, #2d3136); display: grid; grid-template-columns: 47px 51px 48px 51px 49px 20px 47px 40px; align-items: center; }
.dock i { width: 2px; height: 44px; background: #24272a; }
.watermark { position: absolute; left: 2180px; top: 23px; display: flex; align-items: center; font-size: 17px; font-weight: 600; color: #555a60; }
.watermark svg { opacity: .35; filter: grayscale(1); }
.goto { position: absolute; top: 662px; width: 54px; height: 98px; padding-bottom: 2px; background: #232a31; }
.prev { left: 0; }
.next { right: 0; width: 52px; }
.seek { position: absolute; left: 26px; top: 1318px; width: 2336px; height: 12px; background: #8b91a5; }
.played { display: block; width: 412px; height: 12px; background: #ec4b57; }
.mark { position: absolute; top: -6px; width: 12px; height: 24px; background: #6a727e; }
.m1 { left: 132px; } .m2 { left: 604px; }
.controls { position: absolute; left: 44px; top: 1356px; height: 40px; display: grid; grid-template-columns: 70px 56px 122px 57px 170px 1427px 74px 71px 75px 73px 69px 50px; align-items: center; }
.rate-box { width: 96px; height: 36px; border-radius: 4px; background: #cfd0d2; color: #29303b; font-size: 26px; line-height: 37px; text-align: center; font-weight: 500; }
.rate-box small { font-size: 22px; margin-left: 3px; }
.time { font-size: 25.500px; font-weight: 600; color: #fff; white-space: nowrap; }

/* course content */
.course-tabs { height: 124px; margin: 0 33px 0 32px; padding: 3px 0 0 7px; border-bottom: 2px solid #dedccd; display: grid; grid-template-columns: 79px 272px 199px 117px 138px 260px; font-size: 32px; font-weight: 600; letter-spacing: -.5px; color: #73726c; align-items: center; white-space: nowrap; }
.course-tabs a { line-height: 122px; }
.course-tabs .on { width: 158px; height: 121px; text-align: center; color: #3c3b37; border-bottom: 4px solid #3c3b37; }
article { padding: 106px 0 0 504px; color: #3c3b37; }
h2 { font-size: 46px; line-height: 56px; font-weight: 700; letter-spacing: -.2px; }
article p { width: 1320px; margin-top: 35px; font-size: 31px; line-height: 43.500px; letter-spacing: -.12px; }

/* transcript */
aside { width: 796px; border-left: 2px solid #e4e5e8; background: #f7f8fa; display: flex; flex-direction: column; }
.side-head { height: 116px; padding: 2px 36px 0 32px; border: solid #e2e3e6; border-width: 2px 0 3px; background: #fff; display: flex; justify-content: space-between; align-items: center; }
h3 { font-size: 32px; font-weight: 700; letter-spacing: -.2px; }
.cues { height: 1700px; padding: 26px 0 0 32px; border-right: 2px solid #e8e9eb; display: flex; flex-direction: column; gap: 37.100px; font-size: 30px; line-height: 42px; letter-spacing: -.5px; overflow: hidden; white-space: nowrap; }
.now { margin: -1px 0 -1px -16px; display: flex; flex-direction: column; align-items: flex-start; }
.now span { padding: 0 16px; line-height: 50px; background: #e6f2f6; }
.auto { height: 74px; padding: 0 0 2px 34px; background: #f2f3f5; display: flex; align-items: center; gap: 21px; font-size: 30px; letter-spacing: -.3px; }
```
